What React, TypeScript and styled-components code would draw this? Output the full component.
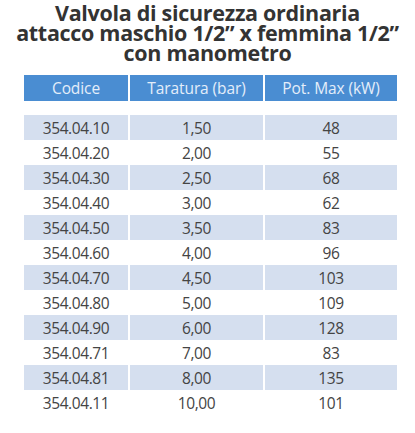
import React from "react";
import styled, { createGlobalStyle } from "styled-components";

const Global = createGlobalStyle`
  html, body { margin: 0; padding: 0; background: #ffffff; }
  body { font-family: "Open Sans", "Noto Sans", sans-serif; }
`;

const Page = styled.div`
  width: 415px;
  height: 433px;
  box-sizing: border-box;
  padding-top: 3px;
  display: flex;
  flex-direction: column;
  align-items: center;
`;

const Title = styled.h1`
  margin: 0;
  font-family: "Open Sans", sans-serif;
  font-weight: 700;
  font-size: 21.5px;
  line-height: 20px;
  letter-spacing: -0.3px;
  color: #333333;
  text-align: center;
`;

const Line = styled.span`
  display: block;
  height: 20px;
`;

const Table = styled.div`
  align-self: flex-start;
  margin-top: 12px;
  margin-left: 24px;
  width: 373px;
  display: grid;
  grid-template-columns: 104px 133px 132px;
  column-gap: 2px;
`;

const HeadCell = styled.div`
  background: #4a8dd2;
  color: #e4eefa;
  height: 26px;
  display: flex;
  align-items: center;
  justify-content: center;
  font-size: 15.5px;
  letter-spacing: -0.1px;
`;

const Spacer = styled.div`
  grid-column: 1 / span 3;
  height: 14px;
`;

const Cell = styled.div<{ $shade: boolean }>`
  background: ${(p) => (p.$shade ? "#d5dfef" : "transparent")};
  color: #444444;
  height: 25px;
  display: flex;
  align-items: center;
  justify-content: center;
  font-size: 15.5px;
  letter-spacing: -0.4px;
`;

const rows: [string, string, string][] = [
  ["354.04.10", "1,50", "48"],
  ["354.04.20", "2,00", "55"],
  ["354.04.30", "2,50", "68"],
  ["354.04.40", "3,00", "62"],
  ["354.04.50", "3,50", "83"],
  ["354.04.60", "4,00", "96"],
  ["354.04.70", "4,50", "103"],
  ["354.04.80", "5,00", "109"],
  ["354.04.90", "6,00", "128"],
  ["354.04.71", "7,00", "83"],
  ["354.04.81", "8,00", "135"],
  ["354.04.11", "10,00", "101"],
];

export default function App() {
  return (
    <Page>
      <Global />
      <Title>
        <Line>Valvola di sicurezza ordinaria</Line>
        <Line>attacco maschio 1/2” x femmina 1/2”</Line>
        <Line>con manometro</Line>
      </Title>
      <Table>
        <HeadCell>Codice</HeadCell>
        <HeadCell>Taratura (bar)</HeadCell>
        <HeadCell>Pot. Max (kW)</HeadCell>
        <Spacer />
        {rows.map((r, i) =>
          r.map((v, j) => (
            <Cell key={`${i}-${j}`} $shade={i % 2 === 0}>
              {v}
            </Cell>
          ))
        )}
      </Table>
    </Page>
  );
}
